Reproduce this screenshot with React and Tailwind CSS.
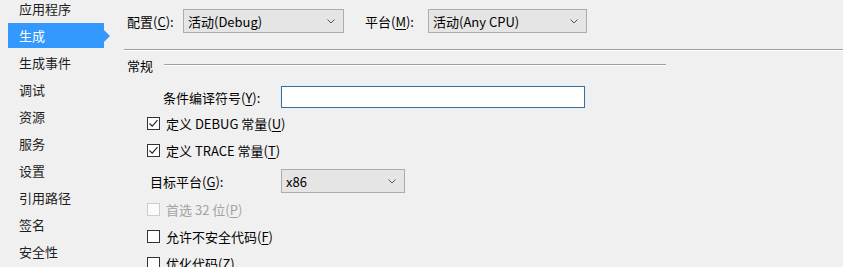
import React from 'react';

// Project properties page: "生成" tab of a Visual Studio style dialog
const navItems = ['应用程序', '生成', '生成事件', '调试', '资源', '服务', '设置', '引用路径', '签名', '安全性'];

function Key({ children }) {
    return <span className="underline underline-offset-2">{children}</span>;
}

function Chevron() {
    return (
        <svg width="8" height="5" viewBox="0 0 8 5" className="shrink-0">
            <path d="M0.5 0.5 L4 4 L7.5 0.5" fill="none" stroke="#555" strokeWidth="1" />
        </svg>
    );
}

function Dropdown({ value, width }) {
    return (
        <div
            className={`flex h-[24px] shrink-0 items-center justify-between border border-[#acacac] bg-[#e5e5e5] pl-[4px] pr-[8px] ${width}`}
        >
            <span className="whitespace-nowrap">{value}</span>
            <Chevron />
        </div>
    );
}

function Checkbox({ checked, disabled, children }) {
    return (
        <div className="flex h-[27px] items-center pl-[23px]">
            <div
                className={`flex h-[13px] w-[13px] items-center justify-center border ${
                    disabled ? 'border-[#cccccc] bg-[#fbfbfb]' : 'border-[#333333] bg-white'
                }`}
            >
                {checked && (
                    <svg width="11" height="11" viewBox="0 0 11 11">
                        <path d="M1.5 5.5 L4.2 8.2 L9.5 2.2" fill="none" stroke="#222" strokeWidth="1.1" />
                    </svg>
                )}
            </div>
            <span className={`ml-[6px] whitespace-nowrap ${disabled ? 'text-[#a3a3a3]' : 'text-black'}`}>
                {children}
            </span>
        </div>
    );
}

export default function App() {
    return (
        <div className="flex h-[267px] w-[843px] overflow-hidden bg-[#f0f0f0] font-['Noto_Sans_CJK_SC','Microsoft_YaHei',sans-serif] text-[13px] leading-none text-black">
            {/* left navigation */}
            <div className="mt-[-4px] w-[124px] shrink-0">
                {navItems.map((item) => {
                    const selected = item === '生成';
                    return (
                        <div key={item} className="flex h-[27px] items-start pl-[8px]">
                            {selected ? (
                                <div className="flex items-center">
                                    <div className="flex h-[25px] w-[96px] items-center bg-[#3399ff] pl-[11px] text-white">
                                        {item}
                                    </div>
                                    <div className="h-0 w-0 border-y-[6px] border-l-[6px] border-y-transparent border-l-[#3399ff]" />
                                </div>
                            ) : (
                                <div className="flex h-[25px] items-center pl-[11px] text-[#1e1e1e]">{item}</div>
                            )}
                        </div>
                    );
                })}
            </div>

            {/* main panel */}
            <div className="flex-1">
                <div className="mt-[9px] flex h-[24px] items-center whitespace-nowrap">
                    <span className="w-[59px] shrink-0 pl-[3px]">
                        配置(<Key>C</Key>):
                    </span>
                    <Dropdown value="活动(Debug)" width="w-[161px]" />
                    <span className="ml-[21px] w-[63px] shrink-0">
                        平台(<Key>M</Key>):
                    </span>
                    <Dropdown value="活动(Any CPU)" width="w-[159px]" />
                </div>

                <div className="mt-[16px] h-px bg-[#a0a0a0]" />
                <div className="h-px bg-white" />

                <div className="mt-[6px] flex h-[16px] w-[542px] items-center">
                    <span className="pl-[3px]">常规</span>
                    <div className="ml-[11px] flex-1">
                        <div className="h-px bg-[#a0a0a0]" />
                        <div className="h-px bg-white" />
                    </div>
                </div>

                <div className="mt-[13px] flex h-[22px] items-center whitespace-nowrap">
                    <span className="w-[157px] shrink-0 pl-[39px]">
                        条件编译符号(<Key>Y</Key>):
                    </span>
                    <div className="h-[22px] w-[304px] border border-[#3b6e9a] bg-white shadow-[0_0_2px_#cfe8ff]" />
                </div>

                <div className="mt-[2px]">
                    <Checkbox checked>
                        定义 DEBUG 常量(<Key>U</Key>)
                    </Checkbox>
                    <Checkbox checked>
                        定义 TRACE 常量(<Key>T</Key>)
                    </Checkbox>
                </div>

                <div className="mt-[5px] flex h-[24px] items-center whitespace-nowrap">
                    <span className="w-[157px] shrink-0 pl-[26px]">
                        目标平台(<Key>G</Key>):
                    </span>
                    <Dropdown value="x86" width="w-[124px]" />
                </div>

                <div className="mt-[3px]">
                    <Checkbox disabled>
                        首选 32 位(<Key>P</Key>)
                    </Checkbox>
                    <Checkbox>
                        允许不安全代码(<Key>F</Key>)
                    </Checkbox>
                    <Checkbox>
                        优化代码(<Key>Z</Key>)
                    </Checkbox>
                </div>
            </div>
        </div>
    );
}
